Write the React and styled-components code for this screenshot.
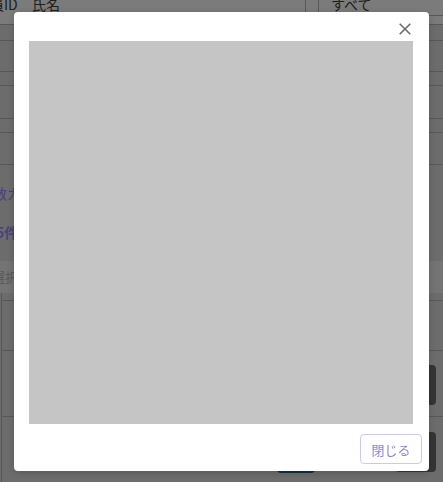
import React from 'react';
import styled, { createGlobalStyle } from 'styled-components';

const GlobalStyle = createGlobalStyle`
    html, body {
        margin: 0;
        padding: 0;
        width: 443px;
        height: 482px;
        overflow: hidden;
        background: #d0d0d0;
        font-family: "Noto Sans CJK JP", "Noto Sans", sans-serif;
    }
`

const rows = [16, 31, 14, 33, 14, 32];

const App = () => {
    return (
        <React.Fragment>
            <GlobalStyle />
            <Page>
                <HeaderRow>
                    <HeaderCell width={56} shift={-10}>会員ID</HeaderCell>
                    <HeaderCell width={273}>氏名</HeaderCell>
                    <Divider />
                    <Divider />
                    <HeaderCell width={80}>すべて</HeaderCell>
                    <EdgeCell />
                </HeaderRow>
                {rows.map((h, i) => (
                    <FormRow key={i} height={h} />
                ))}
                <CountArea>
                    <CountLabel>件数カウント</CountLabel>
                    <CountValue>5件</CountValue>
                </CountArea>
                <SelectBar>一括選択</SelectBar>
                <ResultTable>
                    <ResultRow height={8} />
                    <ResultRow height={50} />
                    <ResultRow height={66}>
                        <DarkButton bottom={11} />
                    </ResultRow>
                    <ResultRow height={66}>
                        <TealButton />
                        <DarkButton bottom={10} />
                    </ResultRow>
                </ResultTable>
            </Page>

            <Overlay />
            <Modal>
                <ModalHeader>
                    <CloseButton aria-label="close">
                        <svg width="12" height="12" viewBox="0 0 12 12">
                            <path d="M0.7 0.7 L11.3 11.3 M11.3 0.7 L0.7 11.3" stroke="#6b6b6b" strokeWidth="1.6" fill="none" />
                        </svg>
                    </CloseButton>
                </ModalHeader>
                <ModalBody>
                    <Preview />
                </ModalBody>
                <ModalFooter>
                    <FooterButton>閉じる</FooterButton>
                </ModalFooter>
            </Modal>
        </React.Fragment>
    );
}

export default App;

const Page = styled.div`
    margin-top: -9px;
    margin-left: -14px;
    width: 460px;
    color: #3a3a3a;
    font-size: 14px;
`
const HeaderRow = styled.div`
    display: flex;
    height: 33px;
    background: #ececec;
    border-bottom: 1px solid #aaa;
`
const HeaderCell = styled.div`
    width: ${props => props.width}px;
    margin-left: ${props => props.shift || 0}px;
    padding-top: 5px;
    line-height: 16px;
    box-sizing: border-box;
    flex-shrink: 0;
    white-space: nowrap;
`
const Divider = styled.div`
    width: 13px;
    box-sizing: border-box;
    border-left: 1px solid #aaa;
    flex-shrink: 0;
`
const EdgeCell = styled.div`
    flex: 1;
    height: 24px;
    border-bottom: 1px solid #aaa;
`
const FormRow = styled.div`
    height: ${props => props.height - 1}px;
    border-bottom: 1px solid #aaa;
`
const CountArea = styled.div`
    height: 96px;
    padding-top: 18px;
    box-sizing: border-box;
    color: #8c7cf0;
    font-size: 14px;
    line-height: 20px;
    display: flex;
    flex-direction: column;
    gap: 19px;
    white-space: nowrap;
`
const CountLabel = styled.div`
    margin-left: -7px;
`
const CountValue = styled.div`
    font-weight: 700;
    margin-left: 10px;
`
const SelectBar = styled.div`
    height: 32px;
    background: #dedede;
    color: #a8a8a8;
    font-size: 13px;
    line-height: 32px;
    text-indent: -20px;
    white-space: nowrap;
`
const ResultTable = styled.div`
    margin-left: 15px;
    border-left: 1px solid #aaa;
`
const ResultRow = styled.div`
    height: ${props => props.height - 1}px;
    border-bottom: 1px solid #aaa;
    display: flex;
    justify-content: flex-end;
    align-items: flex-end;
    gap: 80px;
    padding-right: 10px;
`
const DarkButton = styled.div`
    width: 41px;
    height: 40px;
    margin-bottom: ${props => props.bottom}px;
    border-radius: 4px;
    background: #666;
`
const TealButton = styled.div`
    width: 38px;
    height: 30px;
    margin-bottom: 9px;
    border-radius: 4px;
    background: #1f5d78;
`
const Overlay = styled.div`
    position: fixed;
    inset: 0;
    background: rgba(0, 0, 0, 0.48);
`
const Modal = styled.div`
    position: fixed;
    left: 14px;
    top: 12px;
    width: 415px;
    height: 459px;
    background: #fff;
    border-radius: 4px;
    display: flex;
    flex-direction: column;
    box-shadow: 0 2px 8px rgba(0, 0, 0, 0.2);
`
const ModalHeader = styled.div`
    height: 29px;
    box-sizing: border-box;
    display: flex;
    justify-content: flex-end;
    align-items: flex-start;
    padding: 11px 18px 0 0;
`
const CloseButton = styled.button`
    border: none;
    background: none;
    padding: 0;
    width: 12px;
    height: 12px;
    display: flex;
    cursor: pointer;
`
const ModalBody = styled.div`
    padding: 0 16px 0 15px;
`
const Preview = styled.div`
    height: 383px;
    background: #c5c5c5;
`
const ModalFooter = styled.div`
    display: flex;
    justify-content: flex-end;
    padding: 10px 7px 0 0;
`
const FooterButton = styled.button`
    width: 62px;
    height: 30px;
    box-sizing: border-box;
    border: 1px solid #cfc6f2;
    border-radius: 4px;
    background: #fff;
    color: #8e82d8;
    font-family: "Noto Sans CJK JP", "Noto Sans", sans-serif;
    font-size: 13px;
    padding: 0;
    cursor: pointer;
`
